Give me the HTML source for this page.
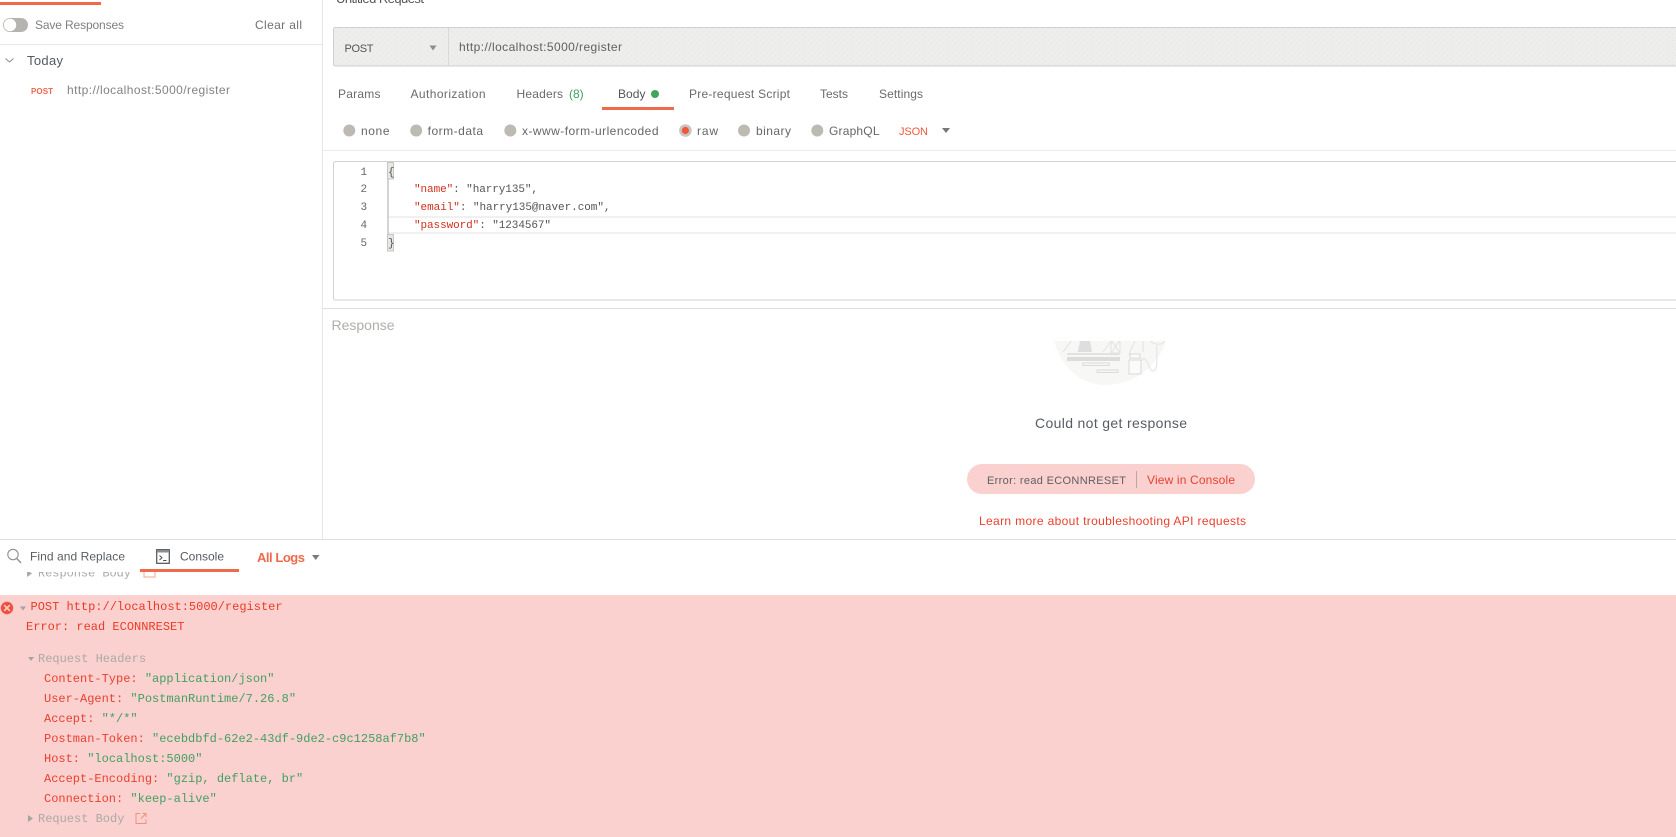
<!DOCTYPE html>
<html><head><meta charset="utf-8"><style>
html,body{margin:0;padding:0;background:#fff;width:1676px;height:837px;overflow:hidden}
svg{display:block}
text{font-family:"Liberation Sans",sans-serif;white-space:pre}
.m{font-family:"Liberation Mono",monospace;font-size:12px}
.c{font-family:"Liberation Mono",monospace;font-size:11px}
.g{fill:#6b6b6b;font-size:12px}
.k{fill:#e8412f}.s{fill:#41a063}.h{fill:#aca9a4}
</style></head><body>
<svg width="1676" height="837" viewBox="0 0 1676 837" xmlns="http://www.w3.org/2000/svg">
<defs>
<pattern id="d" width="6" height="6" patternUnits="userSpaceOnUse"><rect width="6" height="6" fill="#ededec"/><rect x="1" y="1" width="1" height="1" fill="#e5e5e4"/><rect x="4" y="4" width="1" height="1" fill="#e5e5e4"/></pattern>
<clipPath id="ill"><rect x="1040" y="341" width="140" height="50"/></clipPath>
<clipPath id="rb"><rect x="0" y="572" width="400" height="23"/></clipPath>
</defs>

<!-- sidebar -->
<rect x="0" y="2" width="101" height="3" fill="#f0694b"/>
<rect x="322" y="0" width="1" height="539" fill="#e6e6e6"/>
<rect x="0" y="44" width="322" height="1" fill="#e6e6e6"/>
<rect x="3" y="18" width="25" height="14" rx="7" fill="#b5b4ae"/>
<circle cx="10" cy="25" r="6.2" fill="#fff"/>
<text x="35" y="29" class="g" textLength="89" style="fill:#7f7f7f">Save Responses</text>
<text x="255" y="29" class="g" textLength="47" style="fill:#707070">Clear all</text>
<path d="M5.5 58.5 L9.5 62 L13.5 58.5" fill="none" stroke="#8a8a8a" stroke-width="1"/>
<text x="27" y="65" font-size="13" fill="#555a60" textLength="36">Today</text>
<text x="31" y="94" font-size="8" font-weight="bold" fill="#f0674d" textLength="22">POST</text>
<text x="67" y="94" font-size="12" fill="#828282" textLength="163">http://localhost:5000/register</text>

<!-- title clipped -->
<text x="336" y="3" font-size="13" fill="#555" textLength="88">Untitled Request</text>

<!-- URL bar -->
<path d="M1676 27.5H335.5a2 2 0 0 0-2 2V64a2 2 0 0 0 2 2H1676" fill="url(#d)" stroke="none"/>
<path d="M1676 27.5H335.5a2 2 0 0 0-2 2V64a2 2 0 0 0 2 2H1676" fill="none" stroke="#cfcfcf" stroke-width="1"/>
<rect x="448" y="28" width="1" height="38" fill="#d8d8d8"/>
<text x="344.5" y="52" font-size="11" fill="#555" textLength="29">POST</text>
<path d="M429.5 45.5H436.5L433 50.5Z" fill="#8d8d8d"/>
<text x="459" y="51" font-size="12" fill="#606060" textLength="163">http://localhost:5000/register</text>

<!-- tabs -->
<g font-size="12" fill="#6a6a6a">
<text x="338" y="98" textLength="42.5">Params</text>
<text x="410.5" y="98" textLength="75">Authorization</text>
<text x="516.5" y="98" textLength="46.5">Headers</text>
<text x="569" y="98" font-size="12" fill="#3f9f60">(8)</text>
<text x="618" y="98" textLength="27.5" fill="#555">Body</text>
<text x="689" y="98" textLength="101">Pre-request Script</text>
<text x="820" y="98" textLength="28">Tests</text>
<text x="879" y="98" textLength="44">Settings</text>
</g>
<circle cx="655" cy="94" r="4" fill="#41a45f"/>
<rect x="602" y="107" width="72" height="3" fill="#f0694b"/>

<!-- body options -->
<g fill="#bdbab4">
<circle cx="349.3" cy="130.5" r="6"/><circle cx="416.2" cy="130.5" r="6"/><circle cx="510.3" cy="130.5" r="6"/><circle cx="744" cy="130.5" r="6"/><circle cx="817.3" cy="130.5" r="6"/>
<circle cx="685.4" cy="130.5" r="6.3" fill="#c9c5c0"/>
</g>
<circle cx="685.4" cy="130.5" r="3.6" fill="#f0583c"/>
<g font-size="12" fill="#666">
<text x="361" y="135" textLength="28.5">none</text>
<text x="427.6" y="135" textLength="55.5">form-data</text>
<text x="522" y="135" textLength="136.5">x-www-form-urlencoded</text>
<text x="697" y="135" textLength="21">raw</text>
<text x="756" y="135" textLength="35">binary</text>
<text x="829" y="135" textLength="50.5">GraphQL</text>
<text x="899" y="135" font-size="11" textLength="29" fill="#f0583c">JSON</text>
</g>
<path d="M942 128H950L946 133Z" fill="#777"/>
<rect x="323" y="150" width="1353" height="1" fill="#ececec"/>

<!-- editor -->
<path d="M1676 161.5H335.5a2 2 0 0 0-2 2V298a2 2 0 0 0 2 2H1676" fill="none" stroke="#d2d2d2" stroke-width="1"/>
<rect x="388" y="216" width="1288" height="2" fill="#f0f0f0"/>
<rect x="388" y="232" width="1288" height="2" fill="#f0f0f0"/>
<rect x="387.5" y="162" width="1" height="88" fill="#a8a8a8"/>
<rect x="387.5" y="162.5" width="6" height="16.5" fill="#e8e8e2" stroke="#c6c6c6" stroke-width="1"/>
<rect x="387.5" y="234.5" width="6" height="16.5" fill="#e8e8e2" stroke="#c6c6c6" stroke-width="1"/>
<g fill="#666"><text class="c" x="360.5" y="175">1</text><text class="c" x="360.5" y="192">2</text><text class="c" x="360.5" y="210">3</text><text class="c" x="360.5" y="228">4</text><text class="c" x="360.5" y="246">5</text></g>
<text class="c" x="388" y="175" fill="#555">{</text>
<text class="c" x="388" y="246" fill="#555">}</text>
<text class="c" x="414" y="192" textLength="124"><tspan fill="#d0301f">"name"</tspan><tspan fill="#555">: "harry135",</tspan></text>
<text class="c" x="414" y="210" textLength="196.5"><tspan fill="#d0301f">"email"</tspan><tspan fill="#555">: "harry135@naver.com",</tspan></text>
<text class="c" x="414" y="228" textLength="137"><tspan fill="#d0301f">"password"</tspan><tspan fill="#555">: "1234567"</tspan></text>

<!-- response -->
<rect x="323" y="308" width="1353" height="1" fill="#dedede"/>
<text x="331.5" y="330" font-size="14" fill="#b0aea9" textLength="63">Response</text>

<!-- illustration -->
<g clip-path="url(#ill)">
<path d="M1052 330H1168C1167 352 1145 385 1105 385C1075 385 1055 358 1052 330Z" fill="#f7f7f6"/>
<g fill="none" stroke="#e2e2e1" stroke-width="1">
<path d="M1063 352L1072 340M1082 340L1078 352M1103 352L1112 340"/>
<path d="M1111 340H1120V353H1111ZM1111 340L1120 353M1120 340L1111 353"/>
<path d="M1129 355C1131 348 1133 345 1136 340M1143 352V340"/>
<path d="M1130 358H1140V354H1130ZM1129 360H1141V374H1129Z" fill="#fbfbfb" stroke="#d8d8d8"/>
<path d="M1141 362C1146 350 1149 372 1153 371C1159 370 1156 355 1157 345M1150 341C1155 345 1163 346 1165 340"/>
<path d="M1083 363H1109V365.5H1083ZM1097 370H1118V372.5H1097Z" stroke="#dadada"/>
</g>
<path d="M1078 352L1080 341H1090L1092 352Z" fill="#dedede"/>
<rect x="1067" y="353" width="53" height="2" fill="#e2e2e1"/>
<rect x="1067" y="357" width="53" height="4" fill="#dcdcdb"/>
</g>

<text x="1035" y="428" font-size="14" fill="#585c62" textLength="152">Could not get response</text>
<rect x="967" y="464" width="288" height="30" rx="15" fill="#fbd1cf"/>
<text x="987" y="484" font-size="11" fill="#5f5f60" textLength="139">Error: read ECONNRESET</text>
<rect x="1136" y="471" width="1" height="17" fill="#b9a7a5"/>
<text x="1147" y="484" font-size="12" fill="#e8402f" textLength="88">View in Console</text>
<text x="979" y="525" font-size="12" fill="#ec3f2d" textLength="267">Learn more about troubleshooting API requests</text>

<!-- bottom bar -->
<rect x="0" y="539" width="1676" height="1" fill="#dedede"/>
<circle cx="13" cy="554.5" r="5.2" fill="none" stroke="#909090" stroke-width="1.1"/>
<path d="M16.8 558.5L21 563" stroke="#909090" stroke-width="1.3" fill="none"/>
<text x="30" y="560.5" font-size="12" fill="#5a5e62" textLength="95">Find and Replace</text>
<rect x="156.7" y="549.7" width="12.6" height="13.6" fill="none" stroke="#4c5156" stroke-width="1.2"/>
<rect x="157" y="550" width="12" height="2.5" fill="#8a8d90"/>
<path d="M159.5 555.5L162 557.8L159.5 560M163 560.5H166.5" fill="none" stroke="#4c5156" stroke-width="1"/>
<text x="180" y="560.5" font-size="12" fill="#555a60" textLength="44">Console</text>
<rect x="140" y="569" width="99" height="3" fill="#ef6a4c"/>
<text x="257" y="562" font-size="13" font-weight="bold" fill="#ef6a4c" textLength="48">All Logs</text>
<path d="M312 555H319.5L315.7 560Z" fill="#7a7a7a"/>

<!-- clipped response body row -->
<g clip-path="url(#rb)">
<path d="M27 570L32 573.5L27 577Z" fill="#aaa"/>
<text class="m" x="38" y="576.5" fill="#aca9a4" textLength="93">Response Body</text>
<path d="M145 566H144V577H155V572" fill="none" stroke="#f6b4a6" stroke-width="1.2"/>
</g>

<!-- console -->
<rect x="0" y="595" width="1676" height="242" fill="#fbd1cf"/>
<circle cx="7" cy="608" r="6.2" fill="#f0503c"/>
<path d="M4.2 605.2L9.8 610.8M9.8 605.2L4.2 610.8" stroke="#fbd1cf" stroke-width="1.5"/>
<path d="M20 606.5H26L23 610.5Z" fill="#a8a29f"/>
<text class="m" x="30.5" y="610" fill="#ea3a26">POST http://localhost:5000/register</text>
<text class="m" x="26" y="630" fill="#ea3a26">Error: read ECONNRESET</text>

<path d="M28 657H34L31 661Z" fill="#a8a29f"/>
<text class="m h" x="38" y="662">Request Headers</text>
<text class="m k" x="44" y="682">Content-Type: <tspan class="s">"application/json"</tspan></text>
<text class="m k" x="44" y="702">User-Agent: <tspan class="s">"PostmanRuntime/7.26.8"</tspan></text>
<text class="m k" x="44" y="722">Accept: <tspan class="s">"*/*"</tspan></text>
<text class="m k" x="44" y="742">Postman-Token: <tspan class="s">"ecebdbfd-62e2-43df-9de2-c9c1258af7b8"</tspan></text>
<text class="m k" x="44" y="762">Host: <tspan class="s">"localhost:5000"</tspan></text>
<text class="m k" x="44" y="782">Accept-Encoding: <tspan class="s">"gzip, deflate, br"</tspan></text>
<text class="m k" x="44" y="802">Connection: <tspan class="s">"keep-alive"</tspan></text>
<path d="M28 815L33 818.5L28 822Z" fill="#a8a29f"/>
<text class="m h" x="38" y="822">Request Body</text>
<path d="M140 813.5H136V823.5H146V819.5M141 818.5L146 813.5M142.5 813.5H146V817" fill="none" stroke="#f28f7c" stroke-width="1"/>
</svg>
</body></html>
